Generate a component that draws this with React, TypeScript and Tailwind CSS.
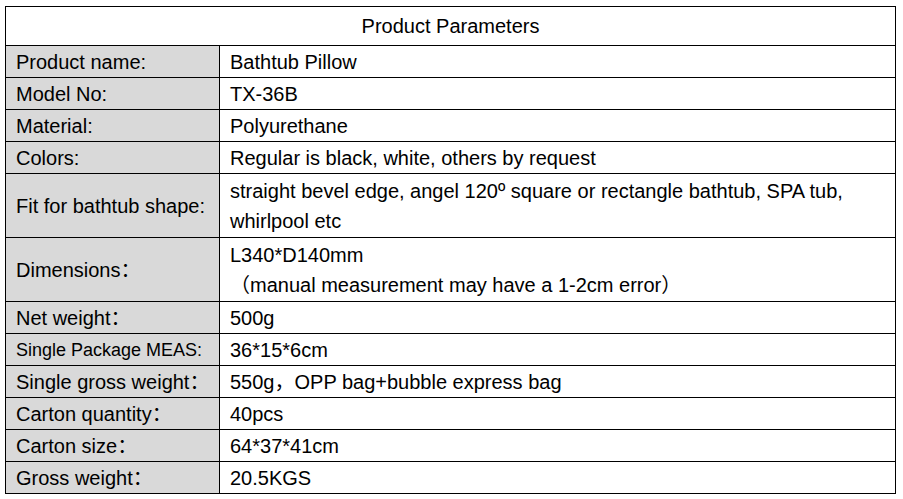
import React from 'react';

type Row = { label: string; value: React.ReactNode; small?: boolean; tall?: boolean };

const rows: Row[] = [
  { label: 'Product name:', value: 'Bathtub Pillow' },
  { label: 'Model No:', value: 'TX-36B' },
  { label: 'Material:', value: 'Polyurethane' },
  { label: 'Colors:', value: 'Regular is black, white, others by request' },
  {
    label: 'Fit for bathtub shape:',
    value: (
      <>
        straight bevel edge, angel 120º square or rectangle bathtub, SPA tub,
        <br />
        whirlpool etc
      </>
    ),
    tall: true,
  },
  {
    label: 'Dimensions：',
    value: (
      <>
        L340*D140mm
        <br />
        （manual measurement may have a 1-2cm error）
      </>
    ),
    tall: true,
  },
  { label: 'Net weight：', value: '500g' },
  { label: 'Single Package MEAS:', value: '36*15*6cm', small: true },
  { label: 'Single gross weight：', value: '550g，OPP bag+bubble express bag' },
  { label: 'Carton quantity：', value: '40pcs' },
  { label: 'Carton size：', value: '64*37*41cm' },
  { label: 'Gross weight：', value: '20.5KGS' },
];

const App = () => {
  return (
    <div className="w-[903px] h-[499px] bg-white pt-[6px] pl-[5px] font-['Liberation_Sans','Noto_Sans_CJK_SC',sans-serif] text-black">
      <table className="w-[891px] border-collapse table-fixed">
        <colgroup>
          <col className="w-[214px]" />
          <col />
        </colgroup>
        <tbody>
          <tr>
            <td colSpan={2} className="h-[39px] border border-black text-center text-[20px] leading-none p-0">
              Product Parameters
            </td>
          </tr>
          {rows.map((row) => (
            <tr key={row.label}>
              <td
                className={`border border-black bg-[#d9d9d9] pl-[10px] pr-1 py-0 whitespace-nowrap ${
                  row.small ? 'text-[18px]' : 'text-[20px]'
                } ${row.tall ? 'h-[64px]' : 'h-[32px]'} leading-none`}
              >
                {row.label}
              </td>
              <td
                className={`border border-black pl-[10px] pr-1 py-0 text-[20px] whitespace-nowrap ${
                  row.tall ? 'h-[64px] leading-[30px]' : 'h-[32px] leading-none'
                }`}
              >
                {row.value}
              </td>
            </tr>
          ))}
        </tbody>
      </table>
    </div>
  );
};

export default App;
